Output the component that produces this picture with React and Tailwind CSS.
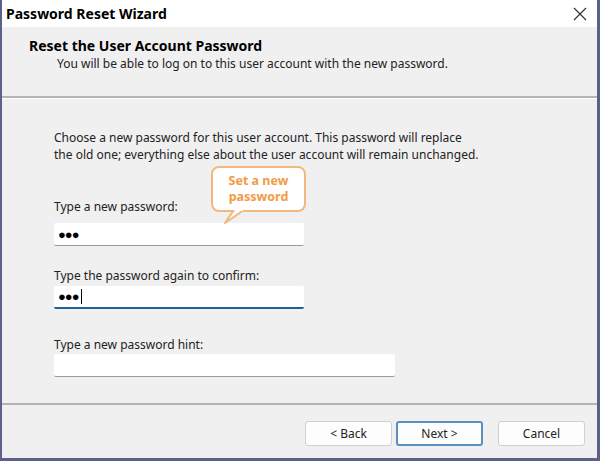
export default function App() {
  const font = { fontFamily: '"Noto Sans", "Liberation Sans", sans-serif' };
  return (
    <div
      className="w-[600px] h-[461px] flex flex-col bg-[#f0f0f0] border-l-2 border-r-[3px] border-b-[3px] border-[#5d6088] text-[#1a1a1a] overflow-hidden"
      style={font}
    >
      {/* Title bar */}
      <div className="h-[27px] bg-white flex items-center justify-between pl-[4px] pr-[8px] shrink-0">
        <span className="text-[14px] font-bold text-black">Password Reset Wizard</span>
        <svg width="14" height="14" viewBox="0 0 14 14" className="mr-[2px]">
          <path d="M1 1 L13 13 M13 1 L1 13" stroke="#333" strokeWidth="1.2" />
        </svg>
      </div>
      {/* Header */}
      <div className="h-[71px] shrink-0 border-b-2 border-[#b4b4b4] flex flex-col pl-[27px] pt-[10px]">
        <div className="text-[14px] font-bold leading-[18px] text-black">Reset the User Account Password</div>
        <div className="text-[12px] leading-[18px] pl-[28px] text-[#222]">
          You will be able to log on to this user account with the new password.
        </div>
      </div>
      <div className="h-px bg-white shrink-0" />
      {/* Body */}
      <div className="flex-1 relative pl-[52px] pt-[30px] text-[12px] leading-[17px] text-[#222]">
        <p>Choose a new password for this user account. This password will replace</p>
        <p>the old one; everything else about the user account will remain unchanged.</p>

        <div className="mt-[35px]">Type a new password:</div>
        <div className="mt-[8px] w-[250px] h-[23px] bg-white border-b border-[#9a9a9a] rounded-[2px] flex items-center pl-[4px]">
          <span className="text-[13px] tracking-[-1px] text-black">●●●</span>
        </div>

        <div className="mt-[21px]">Type the password again to confirm:</div>
        <div className="mt-[2px] w-[250px] h-[23px] bg-white border-b-2 border-[#1f5f9a] rounded-[2px] flex items-center pl-[4px]">
          <span className="text-[13px] tracking-[-1px] text-black">●●●</span>
          <span className="w-px h-[15px] bg-black ml-[2px]" />
        </div>

        <div className="mt-[27px]">Type a new password hint:</div>
        <div className="mt-[1px] w-[341px] h-[23px] bg-white border-b border-[#9a9a9a] rounded-[2px]" />

        {/* Callout */}
        <div className="absolute left-[209px] top-[67px]">
          <div className="relative w-[95px] h-[46px] rounded-[8px] border-2 border-[#f3b97c] bg-white flex flex-col items-center justify-center text-[12.5px] font-bold leading-[16px] text-[#f29b45]">
            <span>Set a new</span>
            <span>password</span>
          </div>
          <svg width="30" height="20" viewBox="0 0 30 20" className="absolute left-[10px] top-[44px]">
            <path d="M13 0 L4 13 L23 0" fill="white" stroke="#f3b97c" strokeWidth="2" strokeLinejoin="round" />
            <path d="M14 0 L22 0" stroke="white" strokeWidth="2" />
          </svg>
        </div>
      </div>
      {/* Footer */}
      <div className="h-[55px] shrink-0 border-t-2 border-[#b4b4b4] flex items-start justify-end pt-[16px] pr-[12px] gap-[4px] text-[12px] text-[#222]">
        <button className="w-[87px] h-[25px] bg-[#fdfdfd] border border-[#d0d0d0] rounded-[3px]">&lt; Back</button>
        <button className="w-[87px] h-[25px] bg-[#fdfdfd] border-2 border-[#5b8fbf] rounded-[3px] mr-[11px]">Next &gt;</button>
        <button className="w-[87px] h-[25px] bg-[#fdfdfd] border border-[#d0d0d0] rounded-[3px]">Cancel</button>
      </div>
    </div>
  );
}
